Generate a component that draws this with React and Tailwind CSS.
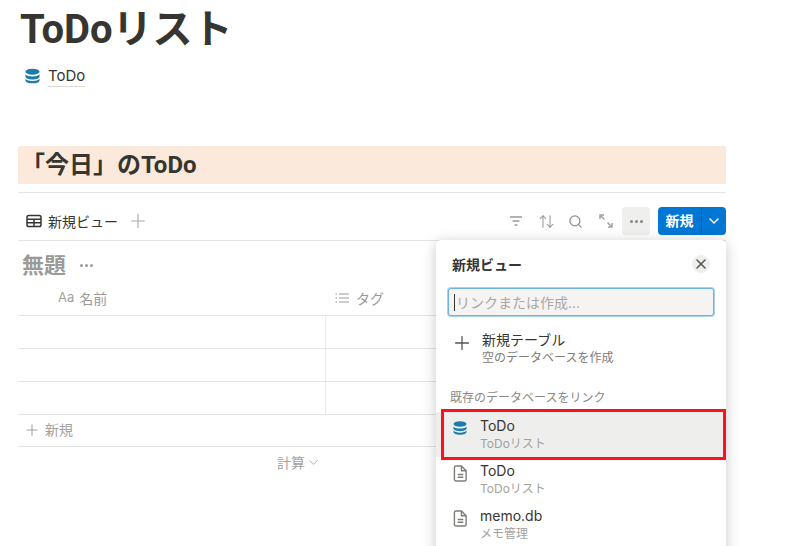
import React from 'react';
import { Plus, Search, ChevronDown, X, ArrowUpDown } from 'lucide-react';

const DbIcon = ({ className }) => (
    <svg viewBox="0 0 16 16" className={className} fill="#1f7ba8">
        <ellipse cx="8" cy="3.400" rx="7.500" ry="3.200" />
        <path d="M.5 6.200c1.200 1.500 4 2.400 7.500 2.400s6.300-.9 7.500-2.400v2.500c0 1.700-3.300 3-7.500 3s-7.500-1.300-7.500-3z" />
        <path d="M.5 10.900c1.200 1.500 4 2.400 7.500 2.400s6.300-.9 7.500-2.400v1.800c0 1.800-3.300 3.100-7.500 3.100s-7.500-1.300-7.500-3.100z" />
    </svg>
);

const PageIcon = () => (
    <svg viewBox="0 0 16 18" className="w-[15px] h-[17px]" fill="none" stroke="#7f7d79" strokeWidth="1.500" strokeLinejoin="round">
        <path d="M3 1h6l5 5v9.500a1.500 1.500 0 0 1-1.500 1.500h-9.500a1.500 1.500 0 0 1-1.500-1.500v-13a1.500 1.500 0 0 1 1.500-1.500z" />
        <path d="M9 1v5h5M5 10h6M5 13h6" />
    </svg>
);

const TableIcon = () => (
    <svg viewBox="0 0 16 14" className="w-4 h-[14px]" fill="none" stroke="#37352f" strokeWidth="1.500">
        <rect x="1" y="1.500" width="14" height="11" rx="1.800" />
        <path d="M1 5.200h14M1 8.800h14M8 5.200v7.300" />
    </svg>
);

const FilterIcon = () => (
    <svg viewBox="0 0 14 12" className="w-[14px] h-3" fill="none" stroke="#9b9a97" strokeWidth="1.400">
        <path d="M1 2h12M3.500 6h7M5.500 10h3" />
    </svg>
);

const ListIcon = () => (
    <svg viewBox="0 0 14 12" className="w-[14px] h-3" fill="none" stroke="#9b9a97" strokeWidth="1.100">
        <path d="M4 2h10M4 6h10M4 10h10M0.500 2h1.500M0.500 6h1.500M0.500 10h1.500" />
    </svg>
);

const ExpandIcon = () => (
    <svg viewBox="0 0 14 14" className="w-[14px] h-[14px]" fill="none" stroke="#a3a29e" strokeWidth="1.500">
        <path d="M1 5V1h4M1 1l4.500 4.500M13 9v4H9M13 13L8.500 8.500" />
    </svg>
);

const Dots = ({ className }) => (
    <div className={`flex gap-[2px] ${className}`}>
        <span className="w-[3px] h-[3px] rounded-full bg-current" />
        <span className="w-[3px] h-[3px] rounded-full bg-current" />
        <span className="w-[3px] h-[3px] rounded-full bg-current" />
    </div>
);

function TableRow() {
    return (
        <div className="h-[33px] border-b border-[#e4e4e2] flex">
            <div className="w-[308px] border-r border-[#e9e9e7]" />
        </div>
    );
}

function PopupItem({ icon, title, sub, active }) {
    return (
        <div className={`h-[45px] flex items-start pl-[17px] ${active ? 'bg-[#eeeeec]' : ''}`}>
            <div className="w-[27px] pt-[8px] shrink-0">{icon}</div>
            <div className="pt-[4px]">
                <div className="text-[14px] leading-[20px] text-[#37352f]">{title}</div>
                <div className="text-[12px] leading-[16px] text-[#a3a29e]">{sub}</div>
            </div>
        </div>
    );
}

export default function App() {
    return (
        <div className="relative w-[797px] h-[546px] overflow-hidden bg-white font-['Inter','Noto_Sans_CJK_JP',sans-serif]">
            <div className="w-[708px] ml-[18px]">
                <h1 className="h-[58px] pl-[2px] font-['Roboto','Noto_Sans_CJK_JP',sans-serif] text-[40px] leading-[60px] font-bold text-[#37352f]">ToDoリスト</h1>
                <div className="flex items-center h-[35px] pl-[7px] gap-[8px]">
                    <DbIcon className="w-[15px] h-[16px]" />
                    <span className="pt-[2px] text-[15px] leading-[20px] text-[#37352f] border-b border-[#d9d9d7]">ToDo</span>
                </div>

                <div className="mt-[53px] h-[38px] bg-[#fbe9dc] pl-[3px] font-['Roboto','Noto_Sans_CJK_JP',sans-serif] text-[24px] leading-[38px] font-bold text-[#37352f]">「今日」のToDo</div>
                <div className="mt-[8px] border-t border-[#e4e4e2]" />

                <div className="h-[48px] flex items-center border-b border-[#e4e4e2] pt-[9px]">
                    <div className="flex items-center pl-[8px] gap-[6px]">
                        <TableIcon />
                        <span className="text-[14px] text-[#37352f]">新規ビュー</span>
                    </div>
                    <Plus className="ml-[9px] w-[22px] h-[22px] text-[#a9a8a5]" strokeWidth={1.200} />
                    <div className="ml-auto flex items-center">
                        <FilterIcon />
                        <ArrowUpDown className="ml-[15px] w-[17px] h-[17px] text-[#9b9a97]" strokeWidth={1.500} />
                        <Search className="ml-[13px] w-[15px] h-[15px] text-[#8f8e8b]" strokeWidth={2} />
                        <div className="ml-[16px]"><ExpandIcon /></div>
                        <div className="ml-[9px] w-[28px] h-[28px] rounded bg-[#efefed] flex items-center justify-center">
                            <Dots className="text-[#8a8884]" />
                        </div>
                        <div className="ml-[8px] h-[28px] w-[68px] rounded bg-[#0077d4] flex text-white">
                            <div className="w-[44px] text-center text-[14px] leading-[28px] font-bold border-r border-[#0a62ab]">新規</div>
                            <div className="flex-1 flex items-center justify-center">
                                <ChevronDown className="w-[16px] h-[16px]" strokeWidth={2.200} />
                            </div>
                        </div>
                    </div>
                </div>

                <div className="h-[44px] flex items-center pt-[4px] pl-[4px] gap-[14px]">
                    <span className="text-[22px] font-bold text-[#9b9a97]">無題</span>
                    <Dots className="text-[#9b9a97]" />
                </div>

                <div className="h-[31px] flex items-center pb-[4px] border-b border-[#e4e4e2] text-[14px] text-[#9b9a97]">
                    <div className="w-[308px] flex items-center pl-[40px] gap-[5px]">
                        <span className="text-[13px] text-[#a3a29e]">Aa</span>
                        <span>名前</span>
                    </div>
                    <div className="flex items-center pl-[9px] gap-[7px]">
                        <ListIcon />
                        <span>タグ</span>
                    </div>
                </div>

                <TableRow />
                <TableRow />
                <TableRow />

                <div className="h-[32px] flex items-center pb-[2px] border-b border-[#e4e4e2] pl-[5px] gap-[4px] text-[14px] text-[#a3a29e]">
                    <Plus className="w-[18px] h-[18px]" strokeWidth={1.400} />
                    <span>新規</span>
                </div>

                <div className="h-[32px] flex items-center pb-[2px] pl-[259px] gap-[1px] text-[14px] text-[#a3a29e]">
                    <span>計算</span>
                    <ChevronDown className="w-[15px] h-[15px]" strokeWidth={1.300} />
                </div>
            </div>

            {/* popup runs off the bottom of the window */}
            <div className="absolute left-[436px] top-[240px] w-[290px] h-[330px] rounded-[5px] bg-white shadow-[0_2px_14px_rgba(15,15,15,0.22)]">
                <div className="h-[48px] flex items-center justify-between pl-4 pr-[16px]">
                    <span className="text-[14px] font-semibold text-[#37352f]">新規ビュー</span>
                    <div className="w-[18px] h-[18px] rounded-full bg-[#efefed] flex items-center justify-center">
                        <X className="w-[16px] h-[16px] text-[#55534e]" strokeWidth={2.200} />
                    </div>
                </div>
                <div className="mx-[12px] h-[28px] rounded-[3px] bg-[#f5f4f2] border border-[#6fb0e6] ring-1 ring-[#a9d2f2] flex items-center pl-[5px] text-[14px] text-[#a9a8a5]">
                    <span className="w-px h-[17px] bg-[#37352f] mr-px" />
                    リンクまたは作成...
                </div>

                <div className="mt-[14px] h-[45px] flex items-start pl-[15px]">
                    <Plus className="mt-[2px] w-[22px] h-[22px] text-[#55534e]" strokeWidth={1.400} />
                    <div className="ml-[9px]">
                        <div className="text-[14px] leading-[20px] text-[#37352f]">新規テーブル</div>
                        <div className="text-[12px] leading-[16px] text-[#7d7c78]">空のデータベースを作成</div>
                    </div>
                </div>

                <div className="mt-[14px] h-[18px] pl-[14px] text-[12px] leading-[18px] text-[#8a8884]">既存のデータベースをリンク</div>

                <div className="mt-[5px]">
                    <PopupItem active icon={<DbIcon className="w-[14px] h-[16px]" />} title="ToDo" sub="ToDoリスト" />
                    <PopupItem icon={<PageIcon />} title="ToDo" sub="ToDoリスト" />
                    <PopupItem icon={<PageIcon />} title="memo.db" sub="メモ管理" />
                </div>
            </div>

            {/* red annotation box drawn on the screenshot */}
            <div className="absolute left-[441px] top-[409px] w-[285px] h-[51px] border-[3px] border-[#ff0f1f]" />
        </div>
    );
}
